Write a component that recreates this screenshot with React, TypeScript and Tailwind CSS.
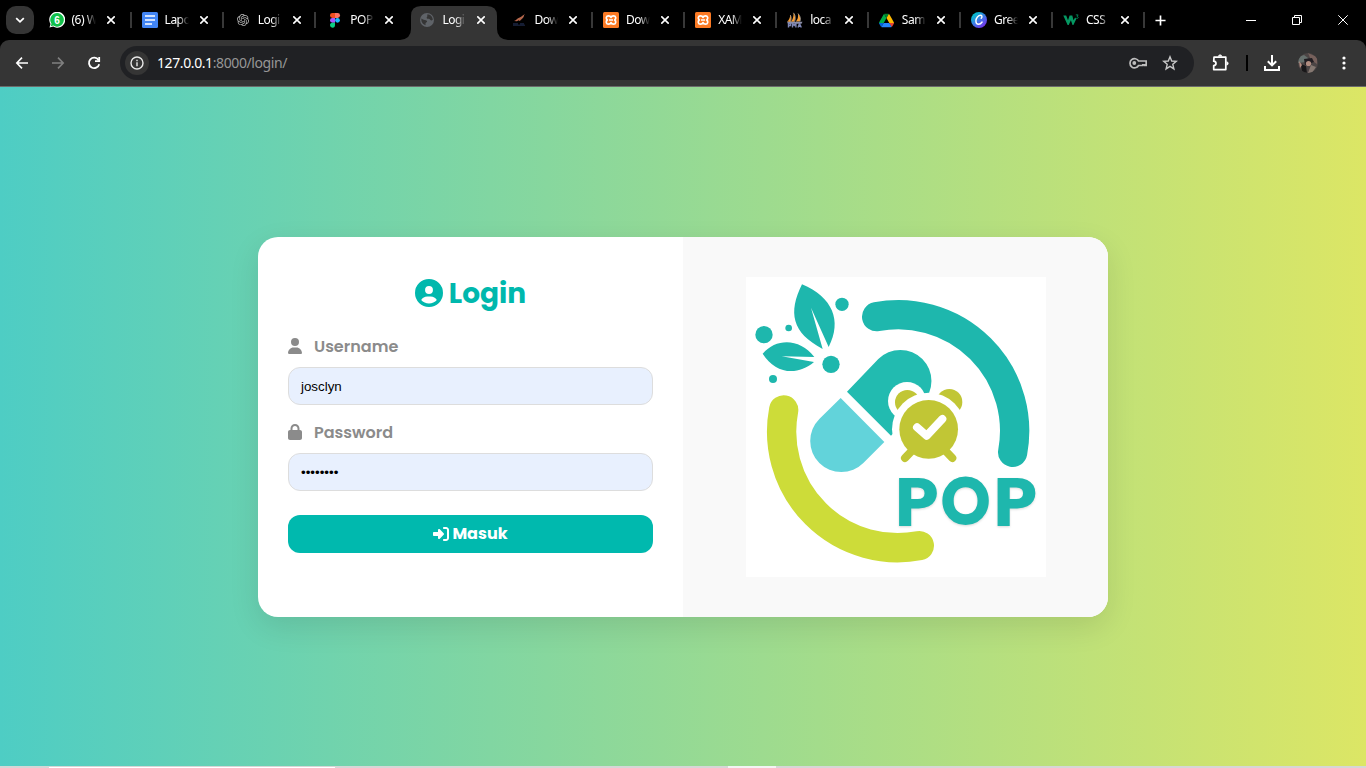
import type { ReactNode } from "react";
import { FaCircleUser, FaUser, FaLock, FaRightToBracket } from "react-icons/fa6";
import { SiOpenai } from "react-icons/si";

const tabFont = "font-['Noto_Sans','Open_Sans',sans-serif]";
const poppins = "font-['Poppins',Inter,sans-serif]";

function WhatsApp() {
  return (
    <svg viewBox="0 0 16 16" className="size-4">
      <path d="M0.5 15.5L1.5 12A8 8 0 1 1 4.2 14.6Z" fill="#fff" />
      <path d="M1.7 14.3L2.5 11.8A6.8 6.8 0 1 1 4.4 13.6Z" fill="#11c04b" />
      <text x="8" y="11.6" textAnchor="middle" fontSize="10" fontWeight="700" fill="#fff" fontFamily="Liberation Sans">6</text>
    </svg>
  );
}

function Docs() {
  return (
    <svg viewBox="0 0 16 16" className="size-4">
      <rect width="16" height="16" rx="1.5" fill="#4285f4" />
      <path d="M3 4h10M3 8h10M3 12h7" stroke="#fff" strokeWidth="1.6" />
    </svg>
  );
}

function Figma() {
  return (
    <svg viewBox="0 0 16 16" className="size-4">
      <path d="M8 1H5.4a2.4 2.4 0 0 0 0 4.9H8z" fill="#f24e1e" />
      <path d="M8 1h2.6a2.4 2.4 0 0 1 0 4.9H8z" fill="#ff7262" />
      <path d="M8 5.9H5.4a2.4 2.4 0 0 0 0 4.8H8z" fill="#a259ff" />
      <circle cx="10.5" cy="8.3" r="2.4" fill="#1abcfe" />
      <path d="M5.4 10.7H8v2.4a2.5 2.5 0 1 1-2.6-2.4z" fill="#0acf83" />
    </svg>
  );
}

function Globe() {
  return (
    <svg viewBox="0 0 16 16" className="size-4">
      <circle cx="8" cy="8" r="7" fill="#5f6368" />
      <path d="M2.4 6.6C4 8.2 5.5 7.8 6.8 8.2c1.8.5 1.6 1.8.4 2.4-.8.4-.8 1.4-.6 2.7C3.8 12.6 2 10 2.4 6.6zM8.5 2.2c-.6 1.4.4 1.8-.6 2.8-.8.9.2 2 1.8 1.8 1.4-.1 1.2 1.8 2.8 1.6l1.3-.6C13.6 5 11.5 2.3 8.5 2.2z" fill="#353535" />
    </svg>
  );
}

function MariaDb() {
  return (
    <svg viewBox="0 0 16 16" className="size-4">
      <path d="M3 9c2-.4 2.6-1.8 4-2.7 1.5-.9 3-.9 4-2.3L14 2c-.8.9-1.2 1.7-1.3 2.8-.4 1.3-1.6 1.7-2.7 3L8.8 9 7.6 8.2 6 9.2z" fill="#b5674c" />
      <path d="M2 11.7h5M9 11.7h4M2 13.3h12" stroke="#151d33" strokeWidth="1.5" />
    </svg>
  );
}

function Xampp() {
  return (
    <svg viewBox="0 0 16 16" className="size-4">
      <rect width="16" height="16" rx="1.5" fill="#fb7a24" />
      <path
        d="M8 5.4C7.6 4.3 6.7 3.9 5.5 3.9C3 3.9 2.6 6.6 4.3 8C2.6 9.4 3 12.1 5.5 12.1C6.7 12.1 7.6 11.7 8 10.6C8.4 11.7 9.3 12.1 10.5 12.1C13 12.1 13.4 9.4 11.7 8C13.4 6.6 13 3.9 10.5 3.9C9.3 3.9 8.4 4.3 8 5.4ZM6 8H10"
        fill="none"
        stroke="#fff"
        strokeWidth="1.7"
        strokeLinejoin="round"
      />
    </svg>
  );
}

function PhpMyAdmin() {
  return (
    <svg viewBox="0 0 16 16" className="size-4">
      <path d="M0 9.5C2 8.5 3 5.5 3.3 3c1 2.5.7 5-.3 7zM3.8 9.8C6 8 6.7 4 6.5.8c2 3 2 6.5.5 9zM8.8 9.5C11 7.5 11.3 4.5 11 1.500c2.300 3 2.700 5.500 1.700 8z" fill="#f89c32" />
      <path d="M3.3 3c1.3 2.5 1 5 0 7M6.5.8c2.3 3 2.3 6.5.8 9M11 1.5c2.6 3 3 5.5 2 8" stroke="#d9cfc4" strokeWidth=".6" fill="none" />
      <path d="M0 9.8h15.5l-1 2H1z" fill="#8d8fa8" />
      <path d="M1.5 15.5v-4h2v2h-2M5.5 15.5v-4l1.7 2 1.7-2v4M11 15.5l1.5-4 1.8 4M11.5 14.2h2.5" stroke="#7f87b5" strokeWidth="1.4" fill="none" />
    </svg>
  );
}

function Drive() {
  return (
    <svg viewBox="0 0 87.3 78" className="size-[15px]">
      <path d="m6.6 66.85 3.85 6.65c.8 1.4 1.95 2.5 3.3 3.3l13.75-23.8h-27.5c0 1.55.4 3.1 1.2 4.5z" fill="#0066da" />
      <path d="m43.65 25-13.75-23.8c-1.35.8-2.5 1.9-3.3 3.3l-25.4 44a9.06 9.06 0 0 0-1.2 4.5h27.5z" fill="#00ac47" />
      <path d="m73.55 76.8c1.35-.8 2.5-1.9 3.3-3.3l1.6-2.75 7.65-13.25c.8-1.4 1.2-2.95 1.2-4.5h-27.5l5.85 11.5z" fill="#ea4335" />
      <path d="m43.65 25 13.75-23.8c-1.35-.8-2.9-1.2-4.5-1.2h-18.5c-1.6 0-3.15.45-4.5 1.2z" fill="#00832d" />
      <path d="m59.8 53h-32.3l-13.75 23.8c1.35.8 2.9 1.2 4.5 1.2h50.8c1.6 0 3.15-.45 4.5-1.2z" fill="#2684fc" />
      <path d="m73.4 26.5-12.7-22c-.8-1.4-1.95-2.5-3.3-3.3l-13.75 23.8 16.15 28h27.45c0-1.55-.4-3.1-1.2-4.5z" fill="#ffba00" />
    </svg>
  );
}

function Canva() {
  return (
    <svg viewBox="0 0 16 16" className="size-4">
      <defs>
        <linearGradient id="canva" x1="0" y1="0" x2="0.8" y2="1">
          <stop offset="0.15" stopColor="#00c4cc" />
          <stop offset="0.6" stopColor="#4470e8" />
          <stop offset="1" stopColor="#7d2ae8" />
        </linearGradient>
      </defs>
      <circle cx="8" cy="8" r="8" fill="url(#canva)" />
      <path d="M10.2 6.3c1-1 1.2-3-.5-3C7.3 3.3 4.9 6 4.9 9c0 2 1 3.3 2.6 3.3 1.5 0 2.7-.9 3.6-2.3" stroke="#fff" strokeWidth="1.4" fill="none" strokeLinecap="round" />
    </svg>
  );
}

function W3() {
  return (
    <svg viewBox="0 0 16 16" className="size-4">
      <path d="M0.3 3.5h2.9L5 8.3 6.6 3.5h2.7L10.5 8.3l1.6-2.8 1.3 1.3-3 6.2H9.5L7.9 8.3 5.7 13H4.6z" fill="#059862" />
      <path d="M12.8 2.9h2.3l-1 1.6c2 .2 1 2.6-.8 1.8" stroke="#059862" strokeWidth=".8" fill="none" />
    </svg>
  );
}

const tabs: { icon: ReactNode; title: string; active?: boolean; divider: boolean; inset: string }[] = [
  { icon: <WhatsApp />, title: "(6) W", divider: true, inset: "pl-[8.5px]" },
  { icon: <Docs />, title: "Lapo", divider: true, inset: "pl-[9.5px]" },
  { icon: <SiOpenai className="size-3 text-[#b4b4b4]" />, title: "Logi", divider: true, inset: "pl-[10.5px]" },
  { icon: <Figma />, title: "POP", divider: false, inset: "pl-[11px]" },
  { icon: <Globe />, title: "Logi", active: true, divider: false, inset: "pl-[11px]" },
  { icon: <MariaDb />, title: "Dow", divider: true, inset: "pl-[11px]" },
  { icon: <Xampp />, title: "Dow", divider: true, inset: "pl-[10.5px]" },
  { icon: <Xampp />, title: "XAM", divider: true, inset: "pl-[10.5px]" },
  { icon: <PhpMyAdmin />, title: "loca", divider: true, inset: "pl-[10.5px]" },
  { icon: <Drive />, title: "Sam", divider: true, inset: "pl-[10px]" },
  { icon: <Canva />, title: "Gree", divider: true, inset: "pl-[10px]" },
  { icon: <W3 />, title: "CSS", divider: true, inset: "pl-[10px]" },
];

function TabStrip() {
  return (
    <div className="flex h-10 shrink-0 bg-black">
      <div className="w-[39px] pl-1.5 pt-1.5">
        <button className="flex size-7 items-center justify-center rounded-[10px] bg-[#353535]">
          <svg viewBox="0 0 10 10" className="size-2.5" fill="none" stroke="#fff" strokeWidth="1.8">
            <path d="M1.2 3.2L5 6.8 8.8 3.2" />
          </svg>
        </button>
      </div>
      {tabs.map((tab, i) => (
        <div key={i} className="relative h-10 w-[92.1px] shrink-0">
          {tab.active && (
            <svg viewBox="0 0 108 34" className="absolute -left-[7px] top-1.5 h-[34px] w-[108px]" fill="#353535">
              <path d="M0 34Q11 33 11 23V10Q11 0 21 0H87Q97 0 97 10V23Q97 33 108 34Z" />
            </svg>
          )}
          <div className={`relative flex h-10 items-center ${tab.inset}`}>
            <span className="flex w-[18px] shrink-0 items-center justify-center">{tab.icon}</span>
            <span
              className={`ml-[6px] w-6 shrink-0 whitespace-nowrap text-[12px] tracking-[-0.5px] text-white [mask-image:linear-gradient(to_right,#000_55%,transparent)] ${tabFont}`}
            >
              {tab.title}
            </span>
            <svg viewBox="0 0 8 8" className="ml-[11px] size-2 shrink-0" stroke="#fff" strokeWidth="1.6">
              <path d="M0.3 0.3L7.7 7.7M7.7 0.3L0.3 7.7" />
            </svg>
          </div>
          {tab.divider && <span className="absolute -right-px top-3 h-4 w-0.5 bg-[#383838]" />}
        </div>
      ))}
      <div className="flex w-8 items-center justify-center">
        <svg viewBox="0 0 12 12" className="size-[11px]" stroke="#fff" strokeWidth="1.8">
          <path d="M6 0.5V11.5M0.5 6H11.5" />
        </svg>
      </div>
      <div className="ml-auto flex items-center">
        {[
          <path key="a" d="M0 5.5H10" />,
          <path key="b" d="M0.5 2.5H7.5V9.5H0.5ZM2.5 2.5V0.5H9.5V7.5H7.5" />,
          <path key="c" d="M0.3 0.3L9.7 9.7M9.7 0.3L0.3 9.7" />,
        ].map((shape, i) => (
          <span key={i} className="flex w-[46px] items-center justify-center">
            <svg viewBox="0 0 10 10" className="size-2.5 overflow-visible" fill="none" stroke="#fff" strokeWidth="1">
              {shape}
            </svg>
          </span>
        ))}
      </div>
    </div>
  );
}

function Toolbar() {
  return (
    <div className="shrink-0 bg-black">
      <div className="flex h-[47px] items-center rounded-t-[9px] border-b border-[#6b6b6b] bg-[#353535]">
        <svg viewBox="0 0 12 12" className="ml-4 size-3 overflow-visible" fill="none" stroke="#fff" strokeWidth="1.6">
          <path d="M12 6H1M6 0.6L0.8 6 6 11.4" />
        </svg>
        <svg viewBox="0 0 12 12" className="ml-6 size-3 overflow-visible" fill="none" stroke="#808080" strokeWidth="1.6">
          <path d="M0 6H11M6 0.6L11.2 6 6 11.4" />
        </svg>
        <svg viewBox="0 0 12 12" className="ml-6 size-3 overflow-visible" fill="none" stroke="#fff" strokeWidth="1.8">
          <path d="M10.5 3A5.2 5.2 0 1 0 11.2 7.2" />
          <path d="M11.2 0V4.2H7" />
        </svg>
        <div className="ml-5 flex h-[34px] w-[1074px] items-center rounded-full bg-[#202124] pl-[5px]">
          <span className="flex size-6 items-center justify-center rounded-full bg-[#353535]">
            <svg viewBox="0 0 14 14" className="size-3.5" fill="none" stroke="#e8e8e8" strokeWidth="1.4">
              <circle cx="7" cy="7" r="6" />
              <path d="M7 6.3V10.3M7 3.7V5.2" />
            </svg>
          </span>
          <span className={`ml-2 whitespace-nowrap text-[14px] leading-5 tracking-[-0.4px] text-[#969696] ${tabFont}`}>
            <span className="text-white">127.0.0.1</span>:8000/login/
          </span>
          <svg viewBox="0 0 18 12" className="ml-auto h-3 w-[18px]" fill="none" stroke="#bdbdbd" strokeWidth="1.7">
            <path d="M9.6 4H17.2V8.5H15.8V7.8H13.8V8.5H9.6A4.6 4.6 0 1 1 9.6 4Z" />
            <circle cx="5.3" cy="6" r="1.9" fill="#bdbdbd" stroke="none" />
          </svg>
          <svg viewBox="0 0 16 16" className="ml-[15px] mr-4 size-4" fill="none" stroke="#c7c7c7" strokeWidth="1.4">
            <path d="M8 1.8L9.7 6 14.3 6.3 10.8 9.3 11.9 13.9 8 11.4 4.1 13.9 5.2 9.3 1.7 6.3 6.3 6Z" />
          </svg>
        </div>
        <svg viewBox="0 0 18 18" className="ml-[17px] size-[18px]" fill="none" stroke="#fff" strokeWidth="1.7" strokeLinejoin="round">
          <path d="M3 3.2H14.8V15.6H2.7V11.5Q5 11.3 5 9.4T2.7 7.2Z" />
          <path d="M7.5 2.5A1.6 1.6 0 0 1 10.7 2.5M15.5 7.8A1.6 1.6 0 0 1 15.5 11" fill="#fff" strokeWidth="1" />
        </svg>
        <span className="ml-[17px] h-4 w-0.5 bg-black" />
        <svg viewBox="0 0 16 16" className="ml-4 size-4" fill="none" stroke="#fff" strokeWidth="2">
          <path d="M8 0V10M3.8 6.2L8 10.4 12.2 6.2M1 11V15H15V11" />
        </svg>
        <svg viewBox="0 0 20 20" className="ml-[18px] size-5">
          <defs>
            <clipPath id="avatar">
              <circle cx="10" cy="10" r="10" />
            </clipPath>
          </defs>
          <g clipPath="url(#avatar)">
            <rect width="20" height="20" fill="#4c4545" />
            <path d="M0 4L6 2 10 5 8 9 0 10z" fill="#66706d" />
            <path d="M10 0L19 4V11L13 7z" fill="#76605b" />
            <path d="M6 6L14 5 16 9 7 12z" fill="#211d22" />
            <circle cx="10.5" cy="10.5" r="2.6" fill="#b08c80" />
            <path d="M3 11L8 13 9 20H4z" fill="#181719" />
            <path d="M13 12L18 14 14 20H10z" fill="#857871" />
            <path d="M1 8L4 12 2 15z" fill="#b78f83" />
          </g>
        </svg>
        <svg viewBox="0 0 4 14" className="ml-6 h-3.5 w-1" fill="#fff">
          <circle cx="2" cy="2" r="1.6" />
          <circle cx="2" cy="7" r="1.6" />
          <circle cx="2" cy="12" r="1.6" />
        </svg>
      </div>
    </div>
  );
}

function Logo() {
  return (
    <svg viewBox="18 21 900 900" className="size-[300px] bg-white" fill="#1eb7ad">
      <circle cx="72" cy="194" r="26" />
      <circle cx="146" cy="174" r="10" />
      <circle cx="306" cy="103" r="20" />
      <circle cx="273" cy="283" r="26" />
      <circle cx="99" cy="327" r="12" />
      <path d="M186 43C278 82 307 152 266 231L213 113 248 237C155 188 144 128 186 43Z" />
      <path d="M68 251C110 203 180 205 223 261L125 259 222 276C170 320 105 310 68 251Z" />
      <g fill="none" strokeWidth="88" strokeLinecap="round">
        <path d="M410 140A349 349 0 0 1 818 547" stroke="#1eb7ad" />
        <path d="M131 420A348 348 0 0 0 538 827" stroke="#cddc39" />
      </g>
      <path d="M321 365L415 267A93 93 0 0 1 547 399L453 497Z" fill="#22bbb0" />
      <path d="M302 384L238 447A93 93 0 0 0 370 579L433 516Z" fill="#62d3da" />
      <circle cx="501" cy="393" r="57" fill="#fff" />
      <g fill="#c1c635">
        <circle cx="502" cy="397" r="37" />
        <circle cx="628" cy="396" r="39" />
      </g>
      <circle cx="566" cy="478" r="110" fill="#fff" />
      <path d="M515 543L495 564M617 543L637 564" stroke="#c1c635" strokeWidth="24" strokeLinecap="round" />
      <circle cx="566" cy="478" r="88" fill="#c1c635" />
      <path d="M531 472L560 497 607 447" fill="none" stroke="#fff" strokeWidth="24" strokeLinecap="round" strokeLinejoin="round" />
      <g className={`drop-shadow-[0_3px_3px_rgba(0,0,0,0.15)] ${poppins}`} fontSize="206" fontWeight="700">
        <text x="464" y="767" textLength="132" lengthAdjust="spacingAndGlyphs">P</text>
        <text x="601" y="766" textLength="152" lengthAdjust="spacingAndGlyphs">O</text>
        <text x="760" y="767" textLength="132" lengthAdjust="spacingAndGlyphs">P</text>
      </g>
    </svg>
  );
}

function Field({ icon, label, children }: { icon: ReactNode; label: string; children: ReactNode }) {
  return (
    <div className="mb-4">
      <div className={`flex h-6 items-center gap-3 text-[16px] font-semibold text-[#8b8b8b] ${poppins}`}>
        {icon}
        <span>{label}</span>
      </div>
      <div className="mt-2 flex h-[38px] items-center rounded-[12px] border border-[#dddddd] bg-[#e8f0fe] px-3 pt-0.5 font-['Liberation_Sans',Arial,sans-serif] text-[13.333px] text-black">
        {children}
      </div>
    </div>
  );
}

export default function App() {
  return (
    <div className="flex h-screen w-full flex-col overflow-hidden">
      <TabStrip />
      <Toolbar />
      <main className="flex min-h-0 flex-1 items-start justify-center bg-[linear-gradient(to_right,#4ecdc4,#dce665)] pt-[150px]">
        <div className="flex h-[380px] w-[850px] overflow-hidden rounded-[20px] bg-white shadow-[0_10px_30px_rgba(0,0,0,0.1)]">
          <section className="w-1/2 px-[30px] pt-[34px]">
            <h1 className={`mb-5 flex h-11 items-center justify-center gap-1.5 text-[28px] font-bold text-[#00b8ad] ${poppins}`}>
              <FaCircleUser className="size-7" />
              <span className="pt-0.5">Login</span>
            </h1>
            <Field icon={<FaUser className="mb-0.5 h-4 w-3.5" />} label="Username">
              josclyn
            </Field>
            <Field icon={<FaLock className="mb-0.5 h-4 w-3.5" />} label="Password">
              ••••••••
            </Field>
            <button className={`mt-6 flex h-[38px] w-full items-center justify-center gap-[3px] rounded-[12px] bg-[#00b9ae] text-[16px] font-bold text-white ${poppins}`}>
              <FaRightToBracket className="size-4" />
              <span>Masuk</span>
            </button>
          </section>
          <section className="flex w-1/2 items-center justify-center bg-[#f9f9f9]">
            <Logo />
          </section>
        </div>
      </main>
      <div className="flex h-0.5 shrink-0 bg-[#d6d6d6]">
        <span className="ml-[49px] mt-px h-px w-[286px] bg-white" />
        <span className="ml-[393px] h-0.5 w-12 bg-[#f3f3f3]" />
      </div>
    </div>
  );
}
